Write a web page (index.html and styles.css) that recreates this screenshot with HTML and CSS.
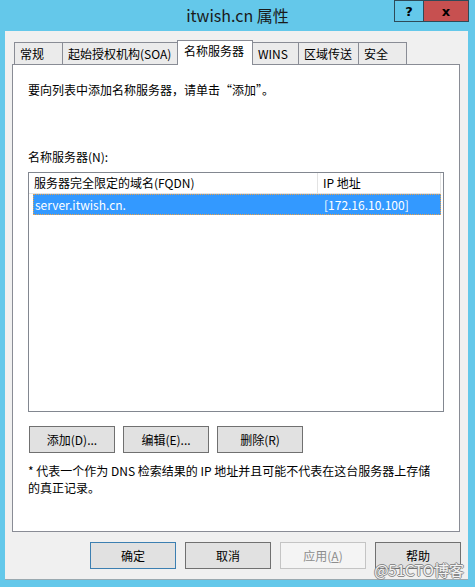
FILE: index.html
```html
<!DOCTYPE html>
<html lang="zh-CN">
<head>
<meta charset="utf-8">
<title>itwish.cn 属性</title>
<link rel="stylesheet" href="styles.css">
</head>
<body>
<div class="window">
  <div class="titlebar">
    <div></div>
    <div class="title">itwish.cn 属性</div>
    <div class="caps"><span class="cap help">?</span><span class="cap close">x</span></div>
  </div>
  <div class="dialog">
    <div class="tabs">
      <div class="tab t1">常规</div>
      <div class="tab t2">起始授权机构(SOA)</div>
      <div class="tab t3 active">名称服务器</div>
      <div class="tab t4">WINS</div>
      <div class="tab t5">区域传送</div>
      <div class="tab t6">安全</div>
    </div>
    <div class="panel">
      <p class="intro">要向列表中添加名称服务器，请单击“添加”。</p>
      <p class="label">名称服务器(N):</p>
      <div class="listbox">
        <div class="lhead">
          <div class="hcell c1">服务器完全限定的域名(FQDN)</div>
          <div class="hcell c2">IP 地址</div>
        </div>
        <div class="lrow selected">
          <div class="rcell c1">server.itwish.cn.</div>
          <div class="rcell c2">[172.16.10.100]</div>
        </div>
      </div>
      <div class="actions">
        <button class="btn">添加(D)...</button>
        <button class="btn">编辑(E)...</button>
        <button class="btn">删除(R)</button>
      </div>
      <p class="note">* 代表一个作为 DNS 检索结果的 IP 地址并且可能不代表在这台服务器上存储<br>的真正记录。</p>
    </div>
    <div class="footer">
      <button class="btn default">确定</button>
      <button class="btn">取消</button>
      <button class="btn disabled">应用(<u>A</u>)</button>
      <button class="btn">帮助</button>
    </div>
    <div class="watermark">@51CTO博客</div>
  </div>
</div>
</body>
</html>
```
FILE: styles.css
```css
* { box-sizing: border-box; }
html, body { margin: 0; padding: 0; }
body {
  background: #64c8ea;
  font-family: "Noto Sans CJK SC", "Noto Sans", sans-serif;
  font-size: 12px;
  color: #000;
}
.window {
  width: 475px;
  height: 587px;
  background: #64c8ea;
  overflow: hidden;
}
.titlebar {
  height: 31px;
  display: grid;
  grid-template-columns: 1fr auto 1fr;
  align-items: start;
}
.title {
  font-size: 16px;
  line-height: 20px;
  padding-top: 5px;
  color: #1a1a1a;
  white-space: nowrap;
}
.caps {
  justify-self: end;
  display: flex;
  margin-right: 6px;
}
.cap {
  height: 22px;
  display: flex;
  align-items: center;
  justify-content: center;
  font-family: "DejaVu Sans", sans-serif;
  font-weight: bold;
  font-size: 13px;
  color: #000;
  border: 1px solid #2e4a58;
}
.help { width: 29px; border-right: none; }
.close { width: 46px; background: #c75050; }

.dialog {
  position: relative;
  margin: 0 7px 0 5px;
  height: 548px;
  background: #f0f0f0;
  padding: 9px 8px 0 7px;
  box-shadow: 0 1px 0 #9aa9b0;
}
.tabs {
  display: flex;
  align-items: flex-end;
  height: 24px;
  padding-left: 2px;
  position: relative;
  z-index: 2;
}
.tab {
  height: 22px;
  border: 1px solid #898c95;
  border-bottom: none;
  background: #ebebeb;
  margin-left: -1px;
  padding-left: 5px;
  line-height: 21px;
  white-space: nowrap;
}
.tab:first-child { margin-left: 0; }
.t1 { width: 49px; }
.t2 { width: 116px; }
.t3 { width: 76px; }
.t4 { width: 47px; }
.t5 { width: 61px; }
.t6 { width: 49px; }
.tab.active {
  height: 25px;
  margin-bottom: -1px;
  background: #fff;
  line-height: 20px;
  padding-left: 6px;
}
.panel {
  width: 448px;
  height: 468px;
  background: #fff;
  border: 1px solid #898c95;
  padding: 16px 15px 0 15px;
  position: relative;
  z-index: 1;
}
.panel p { margin: 0; }
.intro { line-height: 18px; }
.label { margin-top: 49px !important; line-height: 18px; }
.listbox {
  margin-top: 6px;
  width: 416px;
  height: 240px;
  border: 1px solid #828790;
  padding: 0 2px 0 0;
}
.lhead {
  display: flex;
  height: 21px;
}
.hcell {
  height: 21px;
  border-right: 1px solid #e3e3e3;
  border-bottom: 1px solid #e3e3e3;
  line-height: 20px;
  padding-left: 5px;
  white-space: nowrap;
}
.hcell.c1 { width: 289px; }
.hcell.c2 { width: 123px; }
.lrow {
  display: flex;
  height: 21px;
  margin-left: 4px;
  width: 408px;
}
.lrow.selected {
  background: #3399ff;
  color: #fff;
  outline: 1px dotted #e8a04a;
  outline-offset: -1px;
}
.rcell {
  line-height: 21px;
  padding-left: 2px;
  white-space: nowrap;
}
.rcell.c1 { width: 285px; }
.rcell.c2 { padding-left: 6px; }

.btn {
  width: 86px;
  height: 27px;
  background: #e1e1e1;
  border: 1px solid #707070;
  font-family: "Noto Sans CJK SC", "Noto Sans", sans-serif;
  font-size: 12px;
  color: #000;
  padding: 0;
  line-height: 24px;
}
.btn u { text-decoration: underline; }
.actions {
  display: flex;
  gap: 8px;
  margin-top: 14px;
  padding-left: 1px;
}
.note {
  margin-top: 9px !important;
  line-height: 17px;
  white-space: nowrap;
}
.footer {
  display: flex;
  justify-content: flex-end;
  gap: 9px;
  margin-top: 10px;
  margin-right: -1px;
}
.btn.default { border-color: #3c7fb1; }
.btn.disabled {
  background: #f4f4f4;
  border-color: #c4c4c4;
  color: #8d8d8d;
}
.watermark {
  position: absolute;
  right: 4px;
  bottom: 2px;
  font-size: 15px;
  line-height: 14px;
  color: #f3f3f3;
  font-family: "Noto Sans CJK SC", sans-serif;
  text-shadow: -1px 0 #8a8a8a, 1px 0 #8a8a8a, 0 -1px #8a8a8a, 0 1px #8a8a8a;
  z-index: 3;
}
```
